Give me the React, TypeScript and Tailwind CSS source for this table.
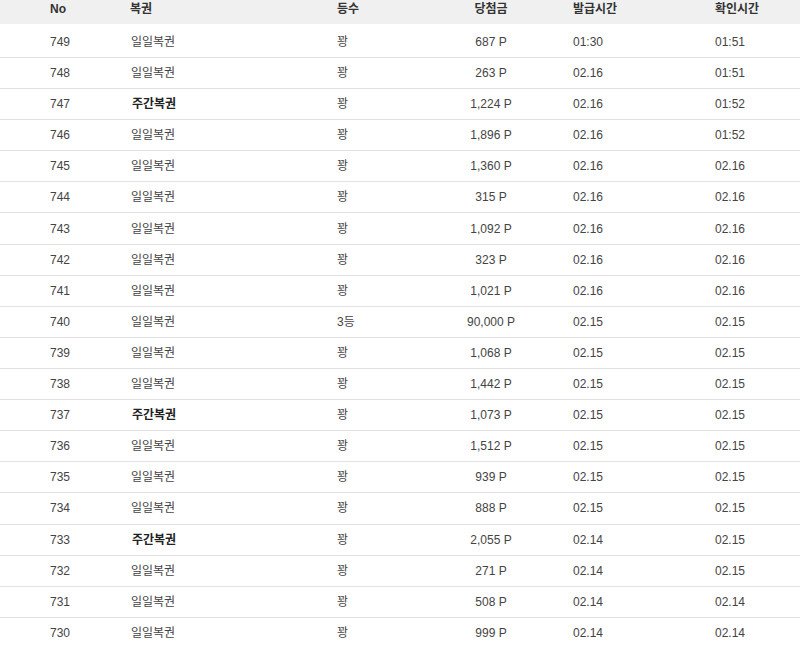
const rows: [number, string, string, string, string, string][] = [
  [749, "일일복권", "꽝", "687 P", "01:30", "01:51"],
  [748, "일일복권", "꽝", "263 P", "02.16", "01:51"],
  [747, "주간복권", "꽝", "1,224 P", "02.16", "01:52"],
  [746, "일일복권", "꽝", "1,896 P", "02.16", "01:52"],
  [745, "일일복권", "꽝", "1,360 P", "02.16", "02.16"],
  [744, "일일복권", "꽝", "315 P", "02.16", "02.16"],
  [743, "일일복권", "꽝", "1,092 P", "02.16", "02.16"],
  [742, "일일복권", "꽝", "323 P", "02.16", "02.16"],
  [741, "일일복권", "꽝", "1,021 P", "02.16", "02.16"],
  [740, "일일복권", "3등", "90,000 P", "02.15", "02.15"],
  [739, "일일복권", "꽝", "1,068 P", "02.15", "02.15"],
  [738, "일일복권", "꽝", "1,442 P", "02.15", "02.15"],
  [737, "주간복권", "꽝", "1,073 P", "02.15", "02.15"],
  [736, "일일복권", "꽝", "1,512 P", "02.15", "02.15"],
  [735, "일일복권", "꽝", "939 P", "02.15", "02.15"],
  [734, "일일복권", "꽝", "888 P", "02.15", "02.15"],
  [733, "주간복권", "꽝", "2,055 P", "02.14", "02.15"],
  [732, "일일복권", "꽝", "271 P", "02.14", "02.15"],
  [731, "일일복권", "꽝", "508 P", "02.14", "02.14"],
  [730, "일일복권", "꽝", "999 P", "02.14", "02.14"],
];

export default function App() {
  return (
    <div className="w-[800px] h-[647px] overflow-hidden bg-white text-[12px] text-[#444] font-['Liberation_Sans','Noto_Sans_CJK_KR',sans-serif]">
      {/* header (top part scrolled out of view) */}
      <div className="flex h-[24px] pb-[7px] mb-[2.8px] items-center bg-[#f0f0f0] font-bold text-[#333]">
        <div className="w-[130px] pl-[50px]">No</div>
        <div className="w-[207px]">복권</div>
        <div className="w-[94px]">등수</div>
        <div className="w-[142px] pr-[22px] text-center">당첨금</div>
        <div className="w-[142px]">발급시간</div>
        <div className="flex-1">확인시간</div>
      </div>

      {rows.map(([no, kind, rank, prize, issued, checked]) => (
        <div key={no} className="flex h-[31.12px] items-center border-b border-[#e2e2e2]">
          <div className="w-[131px] pl-[50px]">{no}</div>
          <div className={"w-[206px] " + (kind === "주간복권" ? "font-bold text-[#222] pl-[1px]" : "")}>{kind}</div>
          <div className="w-[94px]">{rank}</div>
          <div className="w-[142px] pr-[22px] text-center">{prize}</div>
          <div className="w-[142px]">{issued}</div>
          <div className="flex-1">{checked}</div>
        </div>
      ))}
    </div>
  );
}
